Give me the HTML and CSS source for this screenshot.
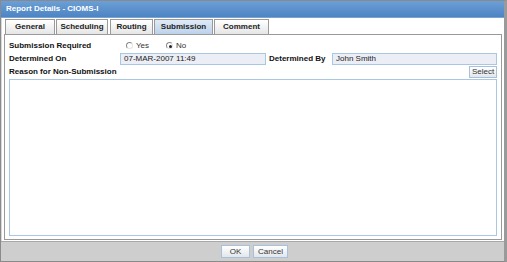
FILE: index.html
```html
<!DOCTYPE html>
<html>
<head>
<meta charset="utf-8">
<link rel="stylesheet" href="styles.css">
</head>
<body>
<div class="window">
  <div class="titlebar">Report Details - CIOMS-I</div>
  <div class="main">
    <div class="tabs">
      <div class="tab t-general">General</div>
      <div class="tab t-sched">Scheduling</div>
      <div class="tab t-route">Routing</div>
      <div class="tab t-sub active">Submission</div>
      <div class="tab t-comm">Comment</div>
    </div>
    <div class="panel">
      <div class="row row-req">
        <span class="label">Submission Required</span>
        <span class="radios">
          <span class="radio r-yes"><span class="dot"></span>Yes</span>
          <span class="radio checked"><span class="dot"></span>No</span>
        </span>
      </div>
      <div class="row row-det">
        <span class="label lab-on">Determined On</span>
        <span class="field f-on">07-MAR-2007 11:49</span>
        <span class="label lab-by">Determined By</span>
        <span class="field f-by">John Smith</span>
      </div>
      <div class="row row-reason">
        <span class="label">Reason for Non-Submission</span>
        <span class="btn btn-select">Select</span>
      </div>
      <div class="textarea"></div>
    </div>
  </div>
  <div class="footer">
    <span class="btn btn-ok">OK</span>
    <span class="btn btn-cancel">Cancel</span>
  </div>
</div>
</body>
</html>
```
FILE: styles.css
```css
html, body {
  margin: 0;
  padding: 0;
  background: #ffffff;
}
body {
  font-family: "Liberation Sans", Arial, sans-serif;
  font-size: 8px;
  color: #000;
}
.window {
  width: 507px;
  height: 262px;
  box-sizing: border-box;
  border: 1px solid #8a8a8a;
  border-right: 3px solid #9a9a9a;
  display: flex;
  flex-direction: column;
  background: #ffffff;
}
.titlebar {
  height: 16px;
  line-height: 15px;
  background: linear-gradient(#6c9fd6, #4d84c4);
  color: #fff;
  font-weight: bold;
  font-size: 8px;
  padding-left: 5px;
  border-bottom: 1px solid #7aa3d0;
}
.main {
  flex: 1;
  display: flex;
  flex-direction: column;
  padding: 1px 2px 1px 2px;
  border-left: 1px solid #d8d8d8;
}
.tabs {
  display: flex;
  padding-left: 1px;
  height: 15px;
}
.tab {
  box-sizing: border-box;
  height: 16px;
  margin-right: 1px;
  border: 1px solid #9a9a9a;
  border-bottom: none;
  background: linear-gradient(#ffffff, #e4e4e4);
  font-weight: bold;
  text-align: center;
  line-height: 14px;
  color: #222;
}
.tab.active {
  background: linear-gradient(#dfeaf6, #b9d0ea);
  color: #222;
}
.t-general { width: 50px; }
.t-sched { width: 52px; margin-right: 2px; }
.t-route { width: 43px; }
.t-sub { width: 59px; }
.t-comm { width: 55px; }
.panel {
  flex: 1;
  border: 1px solid #9a9a9a;
  display: flex;
  flex-direction: column;
  padding: 4px 4px 3px 4px;
}
.row {
  display: flex;
  align-items: center;
  height: 13px;
}
.label {
  font-weight: bold;
  color: #111;
}
.row-req .label { width: 117px; }
.radios { display: flex; }
.radio {
  display: flex;
  align-items: center;
  color: #333;
}
.r-yes { width: 40px; }
.dot {
  width: 7px;
  height: 7px;
  box-sizing: border-box;
  border-radius: 50%;
  border: 1px solid #999;
  border-color: #888 #e4e4e4 #e4e4e4 #888;
  background: #fff;
  margin-right: 3px;
  position: relative;
}
.radio.checked .dot::after {
  content: "";
  position: absolute;
  left: 1.5px;
  top: 1.5px;
  width: 3px;
  height: 3px;
  border-radius: 50%;
  background: #222;
}
.lab-on { width: 111px; }
.field {
  box-sizing: border-box;
  height: 12px;
  line-height: 10px;
  border: 1px solid #a9c6e4;
  background: #eceef5;
  padding-left: 3px;
  color: #222;
}
.f-on { width: 146px; }
.lab-by { width: 63px; padding-left: 3px; }
.f-by { flex: 1; }
.row-reason { justify-content: space-between; }
.btn {
  box-sizing: border-box;
  height: 12px;
  line-height: 10px;
  border: 1px solid #a9c0da;
  background: linear-gradient(#ffffff, #e2e6ec);
  color: #333;
  padding: 0 3px;
  text-align: center;
}
.btn-select { width: 28px; padding: 0; }
.textarea {
  flex: 1;
  margin-top: 1px;
  border: 1px solid #a9c6e4;
  background: #fff;
}
.footer {
  height: 19px;
  background: #cecece;
  border-top: 1px solid #a8a8a8;
  display: flex;
  justify-content: center;
  align-items: center;
  gap: 3px;
  padding-left: 4px;
}
.btn-ok { width: 29px; height: 13px; line-height: 11px; }
.btn-cancel { width: 35px; height: 13px; line-height: 11px; }
```
